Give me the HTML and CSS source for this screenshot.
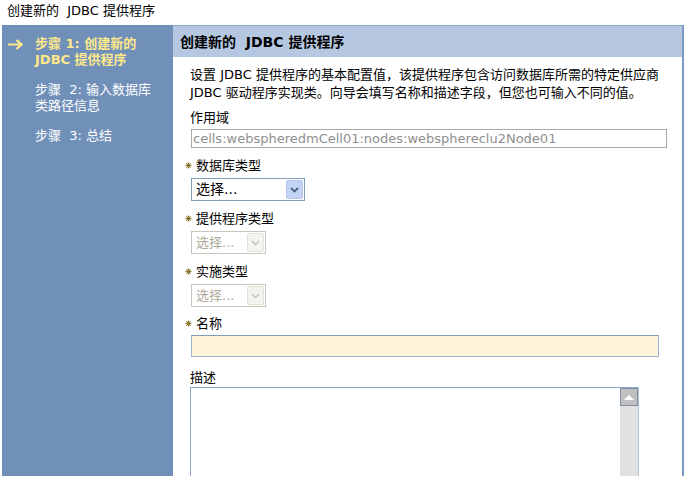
FILE: index.html
```html
<!DOCTYPE html>
<html lang="zh-CN">
<head>
<meta charset="utf-8">
<title>创建新的 JDBC 提供程序</title>
<link rel="stylesheet" href="styles.css">
</head>
<body>
<div class="page-title">创建新的&nbsp; JDBC 提供程序</div>
<div class="frame">
  <nav class="steps">
    <div class="step current">
      <span class="arrow"><svg viewBox="0 0 15 11" width="15" height="11"><path d="M0 5.5H13M8.5 1L13.5 5.5L8.5 10" fill="none" stroke="#ffe98a" stroke-width="2.2"/></svg></span>
      <span class="step-text">步骤 1: 创建新的<br>JDBC 提供程序</span>
    </div>
    <div class="step">
      <span class="arrow"></span>
      <span class="step-text">步骤&nbsp; 2: 输入数据库<br>类路径信息</span>
    </div>
    <div class="step">
      <span class="arrow"></span>
      <span class="step-text">步骤&nbsp; 3: 总结</span>
    </div>
  </nav>
  <main class="panel">
    <div class="panel-head">创建新的&nbsp; JDBC 提供程序</div>
    <div class="panel-body">
      <p class="desc">设置 JDBC 提供程序的基本配置值，该提供程序包含访问数据库所需的特定供应商<br>JDBC 驱动程序实现类。向导会填写名称和描述字段，但您也可输入不同的值。</p>

      <div class="field f-scope">
        <div class="label">作用域</div>
        <div class="readonly">cells:webspheredmCell01:nodes:websphereclu2Node01</div>
      </div>

      <div class="field f-db">
        <div class="label req"><svg class="star" viewBox="0 0 7 7" width="7" height="7"><path d="M3.5 0.5v6M0.5 3.5h6M1.4 1.4l4.2 4.2M5.6 1.4l-4.2 4.2" stroke="#8c7a2e" stroke-width="1.1"/></svg>数据库类型</div>
        <div class="select enabled"><span class="sel-text">选择...</span><span class="sel-btn"><svg viewBox="0 0 9 6" width="9" height="6"><path d="M1 1l3.5 3.5L8 1" fill="none" stroke="#4d6185" stroke-width="1.8"/></svg></span></div>
      </div>

      <div class="field f-prov">
        <div class="label req"><svg class="star" viewBox="0 0 7 7" width="7" height="7"><path d="M3.5 0.5v6M0.5 3.5h6M1.4 1.4l4.2 4.2M5.6 1.4l-4.2 4.2" stroke="#8c7a2e" stroke-width="1.1"/></svg>提供程序类型</div>
        <div class="select disabled"><span class="sel-text">选择...</span><span class="sel-btn"><svg viewBox="0 0 9 6" width="9" height="6"><path d="M1 1l3.5 3.5L8 1" fill="none" stroke="#c9c7ba" stroke-width="1.6"/></svg></span></div>
      </div>

      <div class="field f-impl">
        <div class="label req"><svg class="star" viewBox="0 0 7 7" width="7" height="7"><path d="M3.5 0.5v6M0.5 3.5h6M1.4 1.4l4.2 4.2M5.6 1.4l-4.2 4.2" stroke="#8c7a2e" stroke-width="1.1"/></svg>实施类型</div>
        <div class="select disabled"><span class="sel-text">选择...</span><span class="sel-btn"><svg viewBox="0 0 9 6" width="9" height="6"><path d="M1 1l3.5 3.5L8 1" fill="none" stroke="#c9c7ba" stroke-width="1.6"/></svg></span></div>
      </div>

      <div class="field f-name">
        <div class="label req"><svg class="star" viewBox="0 0 7 7" width="7" height="7"><path d="M3.5 0.5v6M0.5 3.5h6M1.4 1.4l4.2 4.2M5.6 1.4l-4.2 4.2" stroke="#8c7a2e" stroke-width="1.1"/></svg>名称</div>
        <div class="name-input"></div>
      </div>

      <div class="field f-desc">
        <div class="label">描述</div>
        <div class="textarea">
          <div class="ta-content"></div>
          <div class="scrollbar">
            <div class="sb-up"><svg viewBox="0 0 10 5" width="10" height="5"><path d="M0 5L5 0L10 5Z" fill="#ffffff"/></svg></div>
          </div>
        </div>
      </div>
    </div>
  </main>
</div>
</body>
</html>
```

FILE: styles.css
```css
* { box-sizing: border-box; }

body {
  margin: 0;
  background: #ffffff;
  font-family: "DejaVu Sans", "Noto Sans CJK SC", sans-serif;
  font-size: 13px;
  color: #000000;
}

.page-title {
  height: 25px;
  padding: 2px 0 0 7px;
  line-height: 17px;
}

.frame {
  display: flex;
  margin-left: 2px;
  width: 682px;
  height: 451px;
  overflow: hidden;
}

.steps {
  width: 171px;
  flex: none;
  background: #7190b9;
  padding-top: 10px;
  border-top: 1px solid #6d8bb4;
}

.step {
  display: flex;
  line-height: 16px;
  margin-bottom: 14px;
  color: #ffffff;
}

.step .arrow {
  width: 33px;
  flex: none;
  padding: 3px 0 0 6px;
  display: flex;
  align-items: flex-start;
}

.step.current .step-text {
  color: #ffe98a;
  font-weight: bold;
}

.panel {
  flex: 1;
  border-right: 2px solid #7b9ac3;
  background: #ffffff;
}

.panel-head {
  height: 32px;
  background: #b6c8e1;
  border-top: 1px solid #8aa6cc;
  padding: 8px 0 0 7px;
  font-weight: bold;
  font-size: 14px;
  line-height: 16px;
}

.panel-body {
  padding: 9px 0 0 17px;
}

.desc {
  margin: 0;
  line-height: 18px;
}

.label {
  line-height: 18px;
  display: flex;
  align-items: center;
}

.label.req {
  margin-left: -5px;
}

.star {
  margin-right: 4px;
  margin-top: -2px;
}

.f-scope { margin-top: 7px; }
.f-scope .label { margin-bottom: 2px; }

.readonly {
  width: 476px;
  height: 19px;
  margin-left: 1px;
  border: 1px solid #a9a9a9;
  color: #8f8f8f;
  line-height: 17px;
  padding-left: 1px;
  white-space: nowrap;
  overflow: hidden;
}

.f-db { margin-top: 9px; }
.f-prov, .f-impl { margin-top: 9px; }
.f-db .label, .f-prov .label, .f-impl .label { margin-bottom: 3px; }

.select {
  display: flex;
  height: 23px;
  margin-left: 1px;
  border: 1px solid #7f9db9;
  padding: 1px;
}

.select.enabled {
  width: 114px;
}

.select.disabled {
  width: 75px;
  border-color: #c9c7ba;
  color: #aca899;
}

.sel-text {
  flex: 1;
  padding-left: 3px;
  line-height: 19px;
  font-size: 14px;
}

.select.disabled .sel-text { font-size: 13px; }

.sel-btn {
  width: 17px;
  flex: none;
  display: flex;
  align-items: center;
  justify-content: center;
  background: #c4d4f7;
  border: 1px solid #b1c3ee;
  border-radius: 2px;
}

.select.disabled .sel-btn {
  background: #f4f3ee;
  border-color: #e3e1d6;
}

.f-name { margin-top: 8px; }
.f-name .label { margin-bottom: 2px; }

.name-input {
  width: 468px;
  height: 22px;
  margin-left: 1px;
  background: #fff5dd;
  border: 1px solid #9db4d2;
  border-top-color: #7f9db9;
}

.f-desc { margin-top: 12px; }
.f-desc .label { margin-bottom: 0; }

.textarea {
  display: flex;
  width: 449px;
  height: 120px;
  border: 1px solid #8aa6cc;
  border-right-color: #aec2dc;
  background: #ffffff;
}

.ta-content { flex: 1; }

.scrollbar {
  width: 18px;
  flex: none;
  background: #e1e1e1;
}

.sb-up {
  height: 18px;
  background: #c0c0c0;
  border: 1px solid #7f8ea3;
  display: flex;
  align-items: center;
  justify-content: center;
}
```
